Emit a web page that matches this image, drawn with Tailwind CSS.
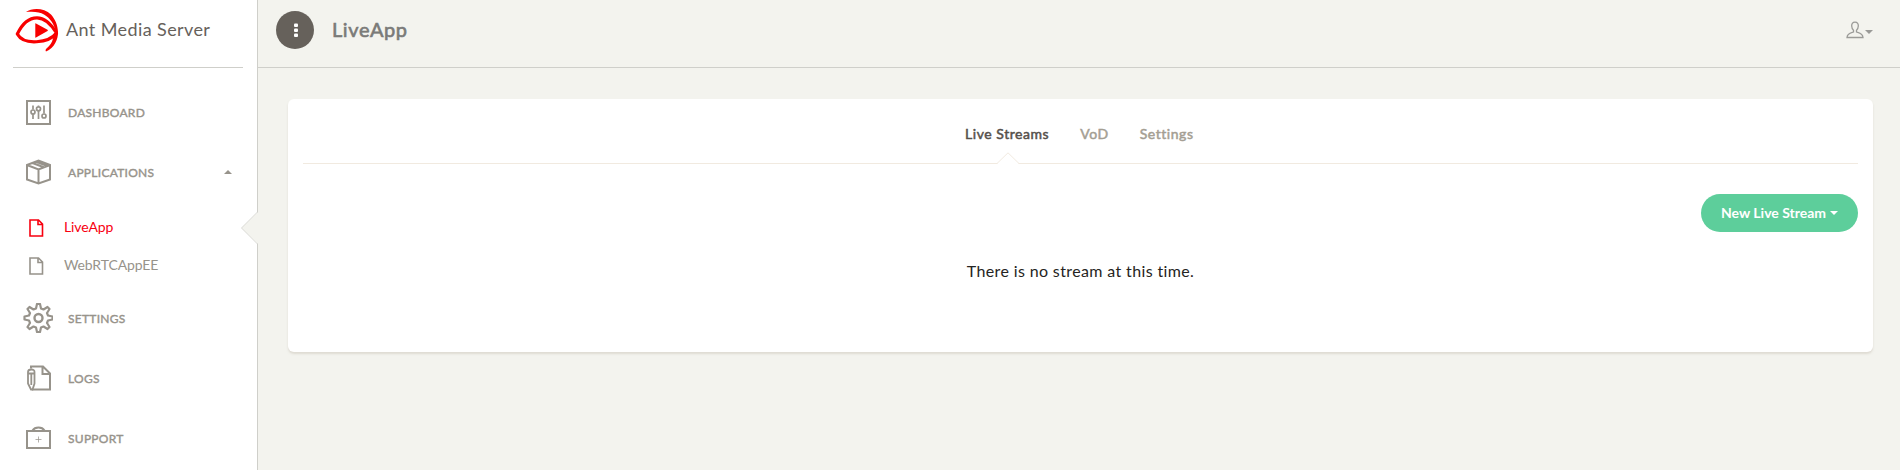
<!DOCTYPE html>
<html lang="en">
<head>
<meta charset="utf-8">
<title>Ant Media Server</title>
<script src="https://cdn.jsdelivr.net/npm/@tailwindcss/browser@4"></script>
</head>
<body class="flex h-[470px] w-[1900px] overflow-hidden bg-[#f3f3ee] font-['Lato',sans-serif] text-[#252422] [font-variant-ligatures:none]">
  <aside class="relative h-full w-[258px] shrink-0 border-r border-[#cfcfca] bg-white text-[#97938b]">
    <div class="mx-[13px] flex h-[68px] w-[230px] items-center border-b border-[#cfcfca] pb-[7px] text-[#66615b]">
      <svg class="ml-[2px] h-[46px] w-[46px]" viewBox="15 7 46 46" fill="none" stroke="#f80000">
        <path d="M17.300 34C23 22 29 17.800 37 17.800C45 17.800 50.500 23 56.500 33C49 43 24 46 17.300 34Z" stroke-width="3.200" stroke-linejoin="round"/>
        <path d="M26 12C32 7.500 44 7.500 51 14.500C55 19 57.800 25 58 32C58.300 39 54.500 48 46 51.500C45.300 50.500 45.500 49.500 46.500 48.500C50 45.500 52 43 53 38.500L56 32C54 24 50 18 44 14.500C40 12 34 11.300 26 12Z" fill="#f80000" stroke="none"/>
        <path d="M35.300 23.500Q35.300 23 36 23.400L47.500 29.800Q48.400 30.400 47.500 31L36 37.600Q35.300 38 35.300 37.200Z" fill="#f80000" stroke="none"/>
      </svg>
      <span class="mb-[2px] ml-[5px] text-[18px] leading-6 tracking-[0.4px] whitespace-nowrap">Ant Media Server</span>
    </div>
    <nav class="pt-[14px] text-[12px] tracking-[0.27px] [&_span]:[-webkit-text-stroke:0.4px]">
      <a class="flex h-[60px] items-center">
        <svg class="ml-[23px] h-[30px] w-[30px]" viewBox="0 0 30 30" fill="none" stroke="currentColor" stroke-width="1.700"><path d="M4 4h23v23H4z" stroke-width="2"/><path d="M10 8.500v4M10 17v5M15.500 8.500v1M15.500 14v8M21 8.500v8"/><circle cx="10" cy="15" r="2"/><circle cx="15.500" cy="11.800" r="2"/><circle cx="21" cy="19" r="2"/></svg>
        <span class="mt-px ml-[15px]">DASHBOARD</span>
      </a>
      <a class="flex h-[60px] items-center">
        <svg class="ml-[23px] h-[30px] w-[30px]" viewBox="0 0 30 30" fill="none" stroke="currentColor" stroke-width="2"><path d="M4 8L15.500 3.500L27 8V22.500L15.500 26.500L4 22.500ZM4 8l11.500 4.500L27 8M15.500 12.500v14M9.500 6l12 4.500M13 4.700l11.500 4.300"/></svg>
        <span class="mt-px ml-[15px]">APPLICATIONS</span>
        <svg class="mr-[25px] ml-auto h-1 w-2" viewBox="0 0 8 4" fill="currentColor"><path d="M0 4L4 0L8 4Z"/></svg>
      </a>
      <div class="pt-[7px] text-[14px] tracking-[-0.12px] [&_span]:[-webkit-text-stroke:0px]">
        <a class="flex h-[38px] items-center text-[#f8000f]">
          <svg class="ml-[28px] h-5 w-4" viewBox="0 0 16 20" fill="none" stroke="currentColor" stroke-width="1.600"><path d="M2 2h8.500l4 4V18H2zM10 2v4.500h4.500"/></svg>
          <span class="mb-[3px] ml-5">LiveApp</span>
        </a>
        <a class="flex h-[38px] items-center">
          <svg class="ml-[28px] h-5 w-4" viewBox="0 0 16 20" fill="none" stroke="currentColor" stroke-width="1.600"><path d="M2 2h8.500l4 4V18H2zM10 2v4.500h4.500"/></svg>
          <span class="mb-[3px] ml-5">WebRTCAppEE</span>
        </a>
      </div>
      <a class="mt-[3px] flex h-[60px] items-center">
        <svg class="ml-[23px] h-[30px] w-[30px]" viewBox="-15.500 -15 30 30" fill="none" stroke="currentColor" stroke-width="2.200"><circle r="4" stroke-width="2.400"/><path stroke-linejoin="round" d="M-1.500 -14H1.500L2.500 -9.500L5 -8.500L9 -11L11 -9L8.500 -5L9.500 -2.500L14 -1.500V1.500L9.500 2.500L8.500 5L11 9L9 11L5 8.500L2.500 9.500L1.500 14H-1.500L-2.500 9.500L-5 8.500L-9 11L-11 9L-8.500 5L-9.500 2.500L-14 1.500V-1.500L-9.500 -2.500L-8.500 -5L-11 -9L-9 -11L-5 -8.500L-2.500 -9.500Z"/></svg>
        <span class="mt-px ml-[15px]">SETTINGS</span>
      </a>
      <a class="flex h-[60px] items-center">
        <svg class="ml-[23px] h-[30px] w-[30px]" viewBox="0 0 30 30" fill="none" stroke="currentColor" stroke-width="2"><path d="M8 5.500V3.500H20L27 10.500V26.500H9M19.500 3.500V11H27"/><path d="M5 9Q5 6.500 8.300 6.500T11.500 9V20.500L9.500 26.500H8L5 20.500ZM5 10.500h6.500M8.300 11v11" stroke-width="1.800"/></svg>
        <span class="mt-px ml-[15px]">LOGS</span>
      </a>
      <a class="flex h-[60px] items-center">
        <svg class="ml-[23px] h-[30px] w-[30px]" viewBox="0 0 30 30" fill="none" stroke="currentColor" stroke-width="2"><path d="M4 8h23v17H4zM9.500 7.500C12 3.500 19 3.500 21.500 7.500"/><path d="M15.500 13.500v6M12.500 16.500h6" stroke-width="0.900" opacity=".8"/></svg>
        <span class="mt-px ml-[15px]">SUPPORT</span>
      </a>
    </nav>
    <svg class="absolute top-[211px] left-[240px] h-[34px] w-[18px]" viewBox="0 0 18 34"><path d="M18 1L1.500 17L18 33Z" fill="#f3f3ee"/><path d="M17.500 1L1.500 17L17.500 33" fill="none" stroke="#d9d9d4"/></svg>
  </aside>
  <main class="flex min-w-0 flex-1 flex-col">
    <header class="flex h-[68px] shrink-0 items-center border-b border-[#cfcfca] pr-[27px] pb-[7px] pl-[18px]">
      <button class="flex h-[38px] w-[38px] items-center justify-center rounded-full bg-[#66615b]">
        <svg class="ml-[2px] h-4 w-1" viewBox="0 0 4 16" fill="#fff"><rect y="1.500" width="4" height="3.600" rx="1"/><rect y="6.500" width="4" height="3.600" rx="1"/><rect y="11.500" width="4" height="3.600" rx="1"/></svg>
      </button>
      <h1 class="mb-[2px] ml-[18px] text-[20px] tracking-[0.6px] text-[#7a7a78] [-webkit-text-stroke:0.6px]">LiveApp</h1>
      <div class="ml-auto flex items-center text-[#9a9a97]">
        <svg class="h-[18px] w-[18px]" viewBox="0 0 18 18" fill="none" stroke="currentColor" stroke-width="1.300"><path d="M9 1.200C6.500 1.200 5.500 3 5.700 5C5.800 7 6.500 8.500 7.500 9.300V11C5 11.800 1.300 12 1 16.500H17C16.700 12 13 11.800 10.500 11V9.300C11.500 8.500 12.200 7 12.300 5C12.500 3 11.500 1.200 9 1.200Z"/></svg>
        <svg class="ml-px mt-[3px] h-1 w-2" viewBox="0 0 8 4" fill="currentColor"><path d="M0 0L4 4L8 0Z"/></svg>
      </div>
    </header>
    <section class="mt-[31px] ml-[30px] h-[253px] w-[1585px] rounded-md bg-white px-[15px] shadow-[0_2px_2px_rgba(204,197,185,0.5)]">
      <div class="relative flex h-[65px] gap-[31px] border-b border-[#f1eae0] pt-[25px] pl-[662px] text-[14px] leading-5 tracking-[0.55px] text-[#a49e93] [&_span]:[-webkit-text-stroke:0.5px]">
        <span class="text-[#55504b]">Live Streams</span>
        <span>VoD</span>
        <span>Settings</span>
        <svg class="absolute top-[53px] left-[693px] h-3 w-6" viewBox="0 0 24 12"><path d="M1 12L12 1L23 12Z" fill="#fff"/><path d="M1 11.500L12 0.800L23 11.500" fill="none" stroke="#f1eae0"/></svg>
      </div>
      <div class="flex justify-end pt-[30px]">
        <button class="flex h-[38px] w-[157px] items-center rounded-full bg-[#5dce9b] pl-5 text-[14px] font-bold text-white">
          <span class="mb-[2px]">New Live Stream</span>
          <svg class="ml-1 h-1 w-2" viewBox="0 0 8 4" fill="currentColor"><path d="M0 0L4 4L8 0Z"/></svg>
        </button>
      </div>
      <p class="mt-[27px] text-center text-[16px] leading-6 tracking-[0.37px]">There is no stream at this time.</p>
    </section>
  </main>
</body>
</html>
